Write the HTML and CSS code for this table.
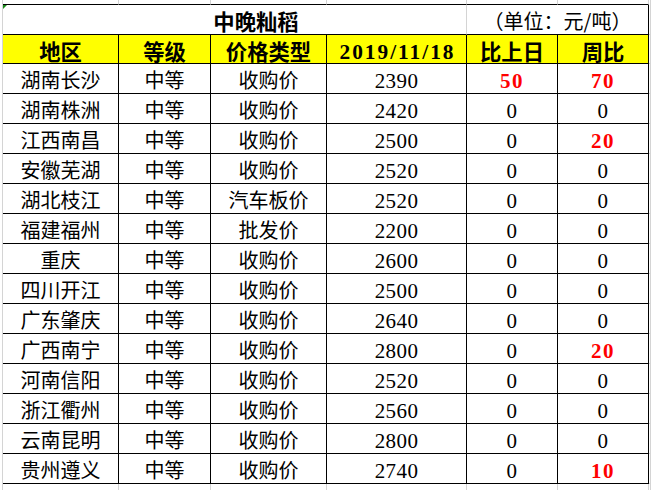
FILE: index.html
```html
<!DOCTYPE html>
<html lang="zh-CN">
<head>
<meta charset="utf-8">
<title>中晚籼稻</title>
<link rel="stylesheet" href="styles.css">
</head>
<body>
<div class="sheet">
  <div class="gap top"></div><div class="gap top"></div><div class="gap top"></div><div class="gap top"></div><div class="gap top"></div><div class="gap top"></div><div class="gap"></div>

  <div class="c title span4"><span>中晚籼稻</span></div>
  <div class="c unit span2"><span>（单位：元/吨）</span></div>
  <div class="edge"></div>

  <div class="c hd">地区</div><div class="c hd">等级</div><div class="c hd">价格类型</div><div class="c hd date">2019/11/18</div><div class="c hd">比上日</div><div class="c hd">周比</div><div class="edge"></div>

  <div class="c zh">湖南长沙</div><div class="c zh">中等</div><div class="c zh">收购价</div><div class="c num">2390</div><div class="c num up">50</div><div class="c num up">70</div><div class="edge"></div>
  <div class="c zh">湖南株洲</div><div class="c zh">中等</div><div class="c zh">收购价</div><div class="c num">2420</div><div class="c num">0</div><div class="c num">0</div><div class="edge"></div>
  <div class="c zh">江西南昌</div><div class="c zh">中等</div><div class="c zh">收购价</div><div class="c num">2500</div><div class="c num">0</div><div class="c num up">20</div><div class="edge"></div>
  <div class="c zh">安徽芜湖</div><div class="c zh">中等</div><div class="c zh">收购价</div><div class="c num">2520</div><div class="c num">0</div><div class="c num">0</div><div class="edge"></div>
  <div class="c zh">湖北枝江</div><div class="c zh">中等</div><div class="c zh">汽车板价</div><div class="c num">2520</div><div class="c num">0</div><div class="c num">0</div><div class="edge"></div>
  <div class="c zh">福建福州</div><div class="c zh">中等</div><div class="c zh">批发价</div><div class="c num">2200</div><div class="c num">0</div><div class="c num">0</div><div class="edge"></div>
  <div class="c zh">重庆</div><div class="c zh">中等</div><div class="c zh">收购价</div><div class="c num">2600</div><div class="c num">0</div><div class="c num">0</div><div class="edge"></div>
  <div class="c zh">四川开江</div><div class="c zh">中等</div><div class="c zh">收购价</div><div class="c num">2500</div><div class="c num">0</div><div class="c num">0</div><div class="edge"></div>
  <div class="c zh">广东肇庆</div><div class="c zh">中等</div><div class="c zh">收购价</div><div class="c num">2640</div><div class="c num">0</div><div class="c num">0</div><div class="edge"></div>
  <div class="c zh">广西南宁</div><div class="c zh">中等</div><div class="c zh">收购价</div><div class="c num">2800</div><div class="c num">0</div><div class="c num up">20</div><div class="edge"></div>
  <div class="c zh">河南信阳</div><div class="c zh">中等</div><div class="c zh">收购价</div><div class="c num">2520</div><div class="c num">0</div><div class="c num">0</div><div class="edge"></div>
  <div class="c zh">浙江衢州</div><div class="c zh">中等</div><div class="c zh">收购价</div><div class="c num">2560</div><div class="c num">0</div><div class="c num">0</div><div class="edge"></div>
  <div class="c zh">云南昆明</div><div class="c zh">中等</div><div class="c zh">收购价</div><div class="c num">2800</div><div class="c num">0</div><div class="c num">0</div><div class="edge"></div>
  <div class="c zh">贵州遵义</div><div class="c zh">中等</div><div class="c zh">收购价</div><div class="c num">2740</div><div class="c num">0</div><div class="c num up">10</div><div class="edge"></div>

  <div class="gap"></div><div class="gap"></div><div class="gap"></div><div class="gap"></div><div class="gap"></div><div class="gap"></div><div class="gap"></div>
</div>
</body>
</html>
```

FILE: styles.css
```css
html, body {
  margin: 0;
  padding: 0;
  background: #ffffff;
}

body {
  font-family: "Noto Sans CJK SC", "Noto Sans", sans-serif;
  color: #000000;
  overflow: hidden;
}

.sheet {
  margin-left: 2px;
  width: 648px;
  border-left: 1px solid #d4d4d4;
  display: grid;
  grid-template-columns: 116px 92px 116px 140px 91px 91px 2px;
  grid-template-rows: 5px 30px 29px repeat(14, 30px) 6px;
}

.sheet > div {
  box-sizing: border-box;
}

.gap {
  border-right: 1px solid #d4d4d4;
}

.gap.top {
  border-bottom: 1px solid #000000;
}

.edge {
  border-right: 1px solid #d4d4d4;
  border-bottom: 1px solid #d4d4d4;
}

.c {
  border-right: 1px solid #000000;
  border-bottom: 1px solid #000000;
  display: flex;
  justify-content: center;
  align-items: flex-end;
  white-space: nowrap;
}

.span4 {
  grid-column: span 4;
}

.span2 {
  grid-column: span 2;
}

.title {
  position: relative;
  border-right-color: #d4d4d4;
  padding-left: 43px;
  padding-bottom: 3px;
  font-size: 21.33px;
  line-height: 21px;
  font-weight: bold;
}

.title::before {
  content: "";
  position: absolute;
  top: 0;
  left: 0;
  border-top: 4px solid #1a8a1a;
  border-right: 4px solid transparent;
}

.unit {
  padding-bottom: 3px;
  font-size: 20px;
  line-height: 20px;
}

.hd {
  background: #ffff00;
  font-size: 21.33px;
  line-height: 21px;
  font-weight: bold;
  padding-bottom: 2px;
}

.hd.date {
  font-family: "Liberation Serif", serif;
  letter-spacing: 2px;
  padding-left: 2px;
  padding-bottom: 0;
}

.zh {
  font-size: 20px;
  line-height: 20px;
  padding-bottom: 3px;
}

.num {
  font-family: "Liberation Serif", serif;
  font-size: 21px;
  line-height: 21px;
  letter-spacing: 0.4px;
  padding-bottom: 1px;
}

.up {
  color: #ff0000;
  font-weight: bold;
  letter-spacing: 1.5px;
}
```
